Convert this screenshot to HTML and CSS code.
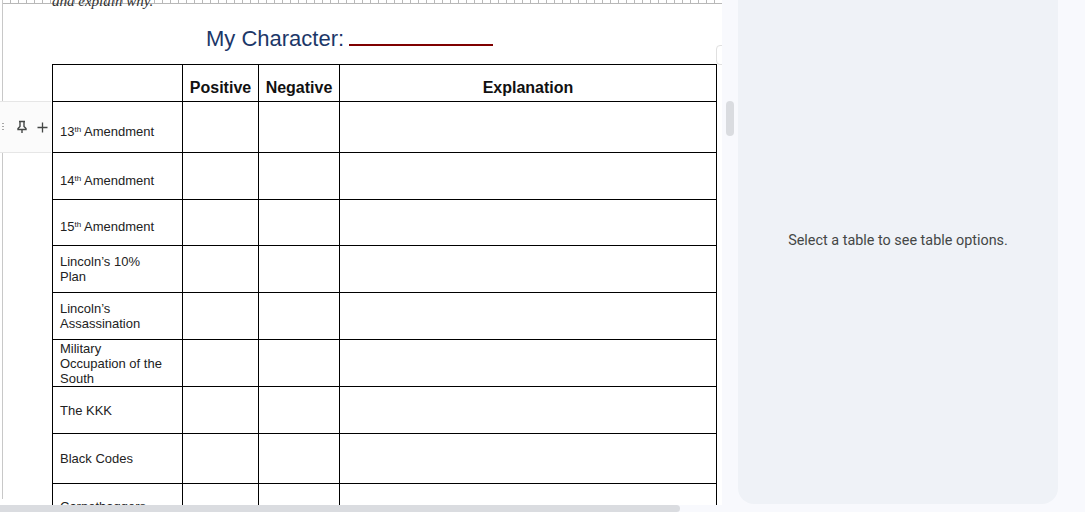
FILE: index.html
```html
<!DOCTYPE html>
<html>
<head>
    <meta charset="utf-8">
    <meta name="viewport" content="width=device-width, initial-scale=1">
    <title>Reconstruction Chart</title>
    <link rel="stylesheet" href="styles.css">
</head>
<body>
    <div class="editor">
        <div class="canvas">
            <div class="ruler"></div>
            <div class="page">
                <p class="prompt">and explain why.</p>
                <p class="title">My Character: <span class="blank"></span></p>

                <table class="chart">
                    <colgroup>
                        <col class="col-topic">
                        <col class="col-pos">
                        <col class="col-neg">
                        <col class="col-exp">
                    </colgroup>
                    <tr class="head">
                        <th></th><th>Positive</th><th>Negative</th><th>Explanation</th>
                    </tr>
                    <tr class="row-51 amend">
                        <td>13<sup>th</sup> Amendment</td><td></td><td></td><td></td>
                    </tr>
                    <tr class="row-47 amend">
                        <td>14<sup>th</sup> Amendment</td><td></td><td></td><td></td>
                    </tr>
                    <tr class="row-46 amend">
                        <td>15<sup>th</sup> Amendment</td><td></td><td></td><td></td>
                    </tr>
                    <tr class="row-47">
                        <td>Lincoln’s 10%<br>Plan</td><td></td><td></td><td></td>
                    </tr>
                    <tr class="row-47">
                        <td>Lincoln’s<br>Assassination</td><td></td><td></td><td></td>
                    </tr>
                    <tr class="row-47">
                        <td>Military<br>Occupation of the<br>South</td><td></td><td></td><td></td>
                    </tr>
                    <tr class="row-47">
                        <td>The KKK</td><td></td><td></td><td></td>
                    </tr>
                    <tr class="row-50">
                        <td>Black Codes</td><td></td><td></td><td></td>
                    </tr>
                    <tr class="row-50 top">
                        <td>Carpetbaggers</td><td></td><td></td><td></td>
                    </tr>
                </table>
            </div>

            <!-- row hover handle -->
            <div class="row-handle">
                <span class="grip"></span>
                <svg class="pin" width="12" height="14" viewBox="0 0 12 14">
                    <path d="M3 1.5h6M4 1.5v5L2 8.5v1h8v-1L8 6.5v-5M6 9.5V13" fill="none" stroke="#444746" stroke-width="1.4"/>
                </svg>
                <svg class="plus" width="11" height="11" viewBox="0 0 11 11">
                    <path d="M5.5 0.5v10M0.5 5.5h10" fill="none" stroke="#444746" stroke-width="1.3"/>
                </svg>
            </div>
            <div class="col-handle"></div>
        </div>
        <div class="hscroll"><div class="hthumb"></div></div>
    </div>

    <div class="vscroll"><div class="vthumb"></div></div>

    <div class="sidebar">
        <p class="hint">Select a table to see table options.</p>
    </div>
</body>
</html>
```

FILE: styles.css
```css
body {
    margin: 0;
    height: 512px;
    overflow: hidden;
    display: flex;
    background-color: #f8f9fd;
    font-family: "Liberation Sans", Arial, sans-serif;
}

.editor {
    width: 722px;
    display: flex;
    flex-direction: column;
}

.canvas {
    position: relative;
    height: 505px;
    overflow: hidden;
    background-color: white;
}

.ruler {
    height: 4px;
    margin-left: 2px;
    border-bottom: 1px solid #b8b8b8;
    box-sizing: border-box;
    background-image: repeating-linear-gradient(90deg, #b8b8b8 0 1px, transparent 1px 8px);
    background-position: 8px 0;
}

.page {
    margin-left: 2px;
    border-left: 1px solid #c8c8c8;
    padding-left: 49px;
    height: 100%;
}

.prompt {
    margin: -10px 0 0 0;
    font-family: "Liberation Serif", serif;
    font-style: italic;
    font-size: 15px;
    line-height: 15px;
    color: #333;
}

.title {
    margin: 17px 0 0 154px;
    font-size: 22px;
    line-height: 26px;
    color: #1c3768;
}

.blank {
    display: inline-block;
    width: 144px;
    height: 18px;
    border-bottom: 2px solid #7f0000;
    vertical-align: baseline;
    margin-left: -1px;
}

.chart {
    margin-top: 12px;
    border-collapse: collapse;
    table-layout: fixed;
    width: 664px;
}

.col-topic { width: 130px; }
.col-pos { width: 76px; }
.col-neg { width: 81px; }
.col-exp { width: 377px; }

.chart th,
.chart td {
    border: 1px solid black;
    padding: 0 7px;
    font-size: 13px;
    line-height: 15px;
    color: #222;
    vertical-align: middle;
}

.chart th {
    font-size: 16px;
    line-height: 19px;
    color: #111;
    padding: 8px 2px 0 2px;
    text-align: center;
}

.head { height: 37px; }
.row-51 { height: 51px; }
.row-50 { height: 50px; }
.row-47 { height: 47px; }
.row-46 { height: 46px; }

.amend td {
    padding-top: 8px;
}

.top td {
    vertical-align: top;
    padding-top: 15px;
}

sup {
    font-size: 8px;
    line-height: 0;
    vertical-align: 4px;
}

.row-handle {
    position: absolute;
    left: 0;
    top: 101px;
    width: 51px;
    height: 50px;
    border-top: 1px solid #e6e6e6;
    border-bottom: 1px solid #e6e6e6;
    background-color: #fbfbfb;
    display: flex;
    align-items: center;
    gap: 9px;
}

.grip {
    width: 2px;
    height: 10px;
    margin-left: 2px;
    background-image: radial-gradient(circle, #a8a8a8 0.9px, transparent 1px);
    background-size: 2px 3px;
}

.pin {
    margin-left: 3px;
}

.plus {
    margin-left: 0;
}

.col-handle {
    position: absolute;
    left: 716px;
    top: 45px;
    width: 10px;
    height: 18px;
    border: 1px solid #e0e0e0;
    border-radius: 4px;
    background-color: white;
}

.hscroll {
    height: 7px;
}

.hthumb {
    width: 680px;
    height: 7px;
    background-color: #dadce0;
    border-radius: 0 4px 4px 0;
}

.vscroll {
    width: 16px;
}

.vthumb {
    width: 8px;
    height: 35px;
    margin: 101px 0 0 4px;
    border-radius: 4px;
    background-color: #dadce0;
}

.sidebar {
    width: 320px;
    height: 504px;
    box-sizing: border-box;
    padding-top: 232px;
    background-color: #eff2f7;
    border-radius: 0 0 16px 16px;
    text-align: center;
}

.hint {
    margin: 0;
    font-family: Roboto, "Noto Sans", sans-serif;
    font-size: 14.4px;
    line-height: 18px;
    color: #444746;
}
```
